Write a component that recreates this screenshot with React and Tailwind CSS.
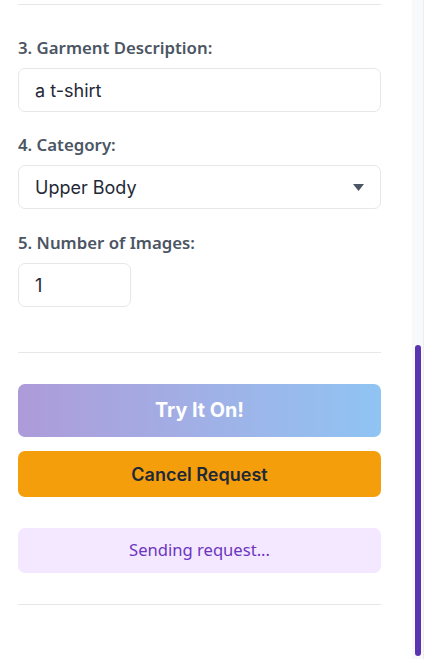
import React from "react";

const label = "block text-[16.8px] font-semibold text-[#4b5563] leading-[24px] mb-[8px]";

export default function App() {
  return (
    <div className="flex w-[424px] h-[659px] overflow-hidden bg-white">
      <div className="w-[412px] shrink-0 pl-[18px] pr-[31px]">
        <div className="h-[4px]" />
        <div className="border-t border-[#e5e7eb]" />
        <div className="pt-[31px]">
          <label className={label} style={{ fontFamily: '"Noto Sans", sans-serif' }}>3. Garment Description:</label>
          <div className="h-[44px] border border-[#e5e7eb] rounded-[7px] flex items-center pl-[16px] text-[18px] text-[#1f2937]" style={{ fontFamily: 'Inter, sans-serif' }}>
            a t-shirt
          </div>
        </div>
        <div className="pt-[21px]">
          <label className={label} style={{ fontFamily: '"Noto Sans", sans-serif' }}>4. Category:</label>
          <div className="h-[44px] border border-[#e5e7eb] rounded-[7px] flex items-center justify-between pl-[16px] pr-[16px] text-[18px] text-[#1f2937]" style={{ fontFamily: 'Inter, sans-serif' }}>
            <span>Upper Body</span>
            <svg width="11" height="7" viewBox="0 0 11 7"><path d="M0 0 H11 L5.5 7 Z" fill="#4b5563" /></svg>
          </div>
        </div>
        <div className="pt-[22px]">
          <label className={label} style={{ fontFamily: '"Noto Sans", sans-serif' }}>5. Number of Images:</label>
          <div className="w-[113px] h-[44px] border border-[#e5e7eb] rounded-[7px] flex items-center pl-[16px] text-[18px] text-[#1f2937]" style={{ fontFamily: 'Inter, sans-serif' }}>
            1
          </div>
        </div>
        <div className="mt-[45px] border-t border-[#e5e7eb]" />
        <button className="mt-[31px] w-full h-[53px] rounded-[7px] bg-gradient-to-r from-[#ad9bd9] to-[#8fc4f3] text-white text-[19.8px] font-bold flex items-center justify-center" style={{ fontFamily: 'Inter, sans-serif' }}>
          Try It On!
        </button>
        <button className="mt-[14px] w-full h-[46px] rounded-[7px] bg-[#f59e0b] text-[#1f2937] text-[18px] font-semibold flex items-center justify-center" style={{ fontFamily: 'Inter, sans-serif' }}>
          Cancel Request
        </button>
        <div className="mt-[31px] h-[45px] rounded-[7px] bg-[#f3e8ff] text-[#6b35c0] text-[16.6px] flex items-center justify-center" style={{ fontFamily: '"Noto Sans", sans-serif' }}>
          Sending request...
        </div>
        <div className="mt-[31px] border-t border-[#e5e7eb]" />
      </div>
      <div className="flex-1 bg-[#f8f9fa] border-r border-[#eceef0] pl-[3px] pt-[345px] pb-[3px]">
        <div className="w-[6px] h-[311px] rounded-full bg-[#5b35b0]" />
      </div>
    </div>
  );
}
